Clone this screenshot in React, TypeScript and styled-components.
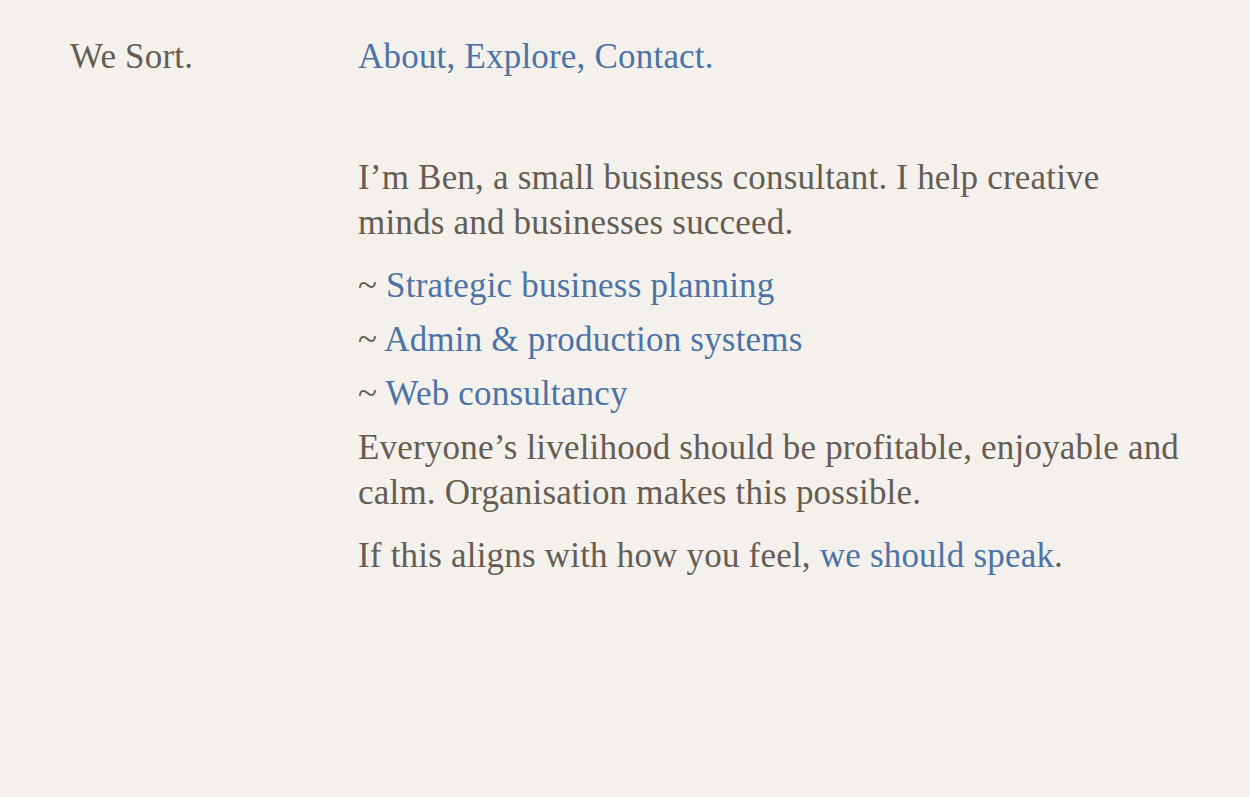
import React from "react";
import styled, { createGlobalStyle } from "styled-components";

const Global = createGlobalStyle`
  html, body { margin: 0; padding: 0; background: #f4f1ec; }
  body { font-family: "Liberation Serif", "DejaVu Serif", serif; color: #655c54; }
`;

const Page = styled.div`
  min-height: 797px;
  box-sizing: border-box;
  padding: 34px 0 0 70px;
  display: grid;
  grid-template-columns: 288px 830px;
  align-content: start;
  row-gap: 76px;
  font-size: 35px;
  letter-spacing: 0.2px;
  line-height: 45px;
`;

const Logo = styled.div`
  color: #655c54;
`;

const Nav = styled.nav`
  color: #4b73a6;
`;

const Link = styled.a`
  color: #4b73a6;
  text-decoration: none;
`;

const Content = styled.main`
  grid-column: 2;
`;

const Para = styled.p`
  margin: 0 0 18px 0;
`;

const List = styled.ul`
  list-style: none;
  margin: 0 0 9px 0;
  padding: 0;
`;

const Item = styled.li`
  margin-bottom: 9px;
  &:last-child { margin-bottom: 0; }
`;

const Tilde = styled.span`
  color: #655c54;
`;

const services = [
  "Strategic business planning",
  "Admin & production systems",
  "Web consultancy",
];

export default function App() {
  return (
    <>
      <Global />
      <Page>
        <Logo>We Sort.</Logo>
        <Nav>
          <Link href="#">About</Link>, <Link href="#">Explore</Link>, <Link href="#">Contact</Link>.
        </Nav>
        <Content>
          <Para>I’m Ben, a small business consultant. I help creative minds and businesses succeed.</Para>
          <List>
            {services.map((s) => (
              <Item key={s}>
                <Tilde>~</Tilde> <Link href="#">{s}</Link>
              </Item>
            ))}
          </List>
          <Para>Everyone’s livelihood should be profitable, enjoyable and calm. Organisation makes this possible.</Para>
          <Para>
            If this aligns with how you feel, <Link href="#">we should speak</Link>.
          </Para>
        </Content>
      </Page>
    </>
  );
}
